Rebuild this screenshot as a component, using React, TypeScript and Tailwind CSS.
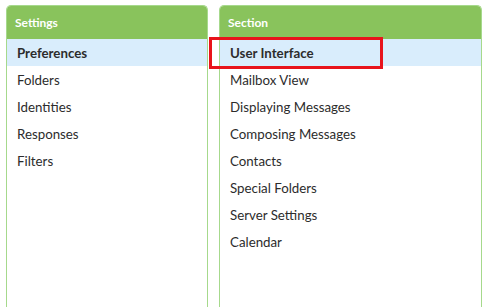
import React from 'react';

const settings = ['Preferences', 'Folders', 'Identities', 'Responses', 'Filters'];
const sections = [
    'User Interface',
    'Mailbox View',
    'Displaying Messages',
    'Composing Messages',
    'Contacts',
    'Special Folders',
    'Server Settings',
    'Calendar',
];

function Panel({ title, items, width, highlight }: { title: string; items: string[]; width: string; highlight?: boolean }) {
    return (
        <div className={`${width} flex flex-col border border-b-0 border-[#a6d98c] rounded-t-[5px] bg-white`}>
            <div className="h-[33px] flex items-center pl-[8px] bg-[#89c35c] rounded-t-[4px] text-white text-[12px] font-bold">
                {title}
            </div>
            <ul className="flex flex-col">
                {items.map((item, i) => (
                    <li
                        key={item}
                        className={`relative h-[27px] flex items-center pl-[10px] pt-[2px] text-[13.3px] text-[#2c2c2c] ${
                            i === 0 ? 'bg-[#d9edfc] font-bold' : ''
                        }`}
                    >
                        {item}
                        {highlight && i === 0 && (
                            <span className="absolute left-[-11px] top-[-2px] w-[174px] h-[32px] border-[3px] border-[#e8141c]" />
                        )}
                    </li>
                ))}
            </ul>
        </div>
    );
}

export default function App() {
    return (
        <div className="w-[483px] h-[307px] bg-white overflow-hidden font-['Lato','Liberation_Sans',sans-serif]">
            <div className="flex gap-[11px] pt-[5px] pl-[6px] h-full">
                <Panel title="Settings" items={settings} width="w-[202px]" />
                <Panel title="Section" items={sections} width="w-[263px]" highlight />
            </div>
        </div>
    );
}
